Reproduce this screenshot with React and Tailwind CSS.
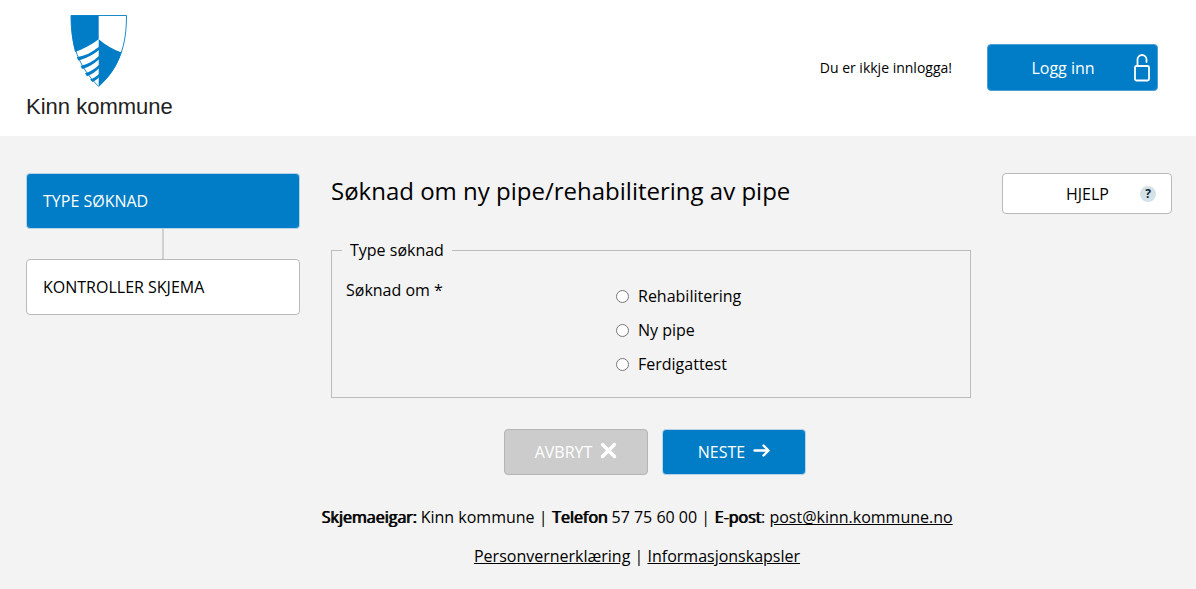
import { useState } from 'react'

const steps = ['Type søknad', 'Kontroller skjema']

const options = [
  { id: 'rehabilitering', label: 'Rehabilitering' },
  { id: 'ny-pipe', label: 'Ny pipe' },
  { id: 'ferdigattest', label: 'Ferdigattest' },
]

function Shield() {
  return (
    <svg className="w-[58px] h-[74px]" viewBox="0 0 58 74" aria-hidden="true">
      <path d="M1 1.500H56.500C56.500 31 50 52 28.700 72.500C8 52 1 31 1 1.500Z" fill="#fff" stroke="#007dc6" strokeWidth="0.9" />
      <path d="M1 1.500H28.700V25.300C21 31 14 35 5 38C2 27 1 14 1 1.500Z" fill="#007dc6" />
      <path d="M28.700 25.300C36 31.500 43 35.500 51.500 38.500C47 52 40 63 28.700 72.500Z" fill="#007dc6" />
      <g fill="#007dc6">
        <path d="M6.800 43.300C15 42 22 38.500 29 32.800V36C22 41.500 16 44.500 8.200 46.400Z" />
        <path d="M10.500 52C17 50.500 23 47.500 29 42V45.300C23.500 50.300 18 53.500 12.200 55Z" />
        <path d="M15 59.300C20 57.800 25 55 29 51V54.200C25.500 58 21.500 60.500 17 62.200Z" />
        <path d="M20 65.500C23.500 64.300 26.500 62.500 29 60V63.200C27 65.200 25 66.800 22.500 68Z" />
      </g>
    </svg>
  )
}

function OpenLock() {
  return (
    <svg className="w-4 h-7" viewBox="0 0 16 28" fill="none" stroke="currentColor" strokeWidth="1.800" aria-hidden="true">
      <rect x="1" y="12" width="14" height="14.500" rx="1.500" />
      <path d="M3.500 12V5.500C3.500 3 5.500 1 8 1S12.500 3 12.500 5.500V8" strokeLinecap="round" />
    </svg>
  )
}

function Header() {
  return (
    <header className="h-[136px] bg-white flex items-start justify-between pl-[26px] pr-[38px]">
      <a href="#" className="flex flex-col items-center pt-3.5">
        <Shield />
        <span className="mt-[5px] text-[22px] leading-7 font-['Liberation_Sans',sans-serif] text-[#222]">Kinn kommune</span>
      </a>
      <div className="flex items-center gap-[35px] pt-11">
        <p className="text-sm">Du er ikkje innlogga!</p>
        <button className="w-[171px] h-[47px] rounded bg-[#007dc6] border border-[#4aa0d5] text-white flex items-center pr-[7px]">
          <span className="flex-1 pl-1">Logg inn</span>
          <OpenLock />
        </button>
      </div>
    </header>
  )
}

function Steps() {
  return (
    <ol className="flex flex-col">
      {steps.map((step, i) => (
        <li key={step} className="flex flex-col">
          {i > 0 && <span className="w-0.5 h-[30px] self-center bg-[#d0d0d0]" />}
          <button
            className={
              i === 0
                ? 'h-14 px-4 rounded border border-[#b8d3e5] bg-[#007dc6] text-white text-left uppercase'
                : 'h-14 px-4 rounded border border-[#b9b9b9] bg-white text-left uppercase'
            }
          >
            {step}
          </button>
        </li>
      ))}
    </ol>
  )
}

function ApplicationForm() {
  const [choice, setChoice] = useState('')

  return (
    <form onSubmit={(e) => e.preventDefault()}>
      <h1 className="text-2xl leading-9">Søknad om ny pipe/rehabilitering av pipe</h1>
      <fieldset className="mt-[29px] border border-[#bbb] px-3.5 pb-[21px]">
        <legend className="-ml-1 px-2 leading-6">Type søknad</legend>
        <div className="grid grid-cols-[270px_1fr] pt-4" role="radiogroup" aria-labelledby="choice-label">
          <span id="choice-label" className="leading-6">Søknad om *</span>
          <div className="flex flex-col gap-2.5 pt-1.5">
            {options.map((option) => (
              <label key={option.id} className="flex items-center gap-[9px] leading-6">
                <input
                  type="radio"
                  name="soknad"
                  value={option.id}
                  checked={choice === option.id}
                  onChange={() => setChoice(option.id)}
                  className="w-[13px] h-[13px]"
                />
                {option.label}
              </label>
            ))}
          </div>
        </div>
      </fieldset>
      <div className="flex justify-center gap-3.5 pt-[31px] pl-2">
        <button
          type="button"
          className="w-36 h-[46px] rounded border border-[#b5b5b5] bg-[#ccc] text-white flex items-center justify-center gap-2"
        >
          AVBRYT
          <svg className="w-[17px] h-[17px] mb-1" viewBox="0 0 17 17" fill="none" stroke="currentColor" strokeWidth="3.400" strokeLinecap="round" aria-hidden="true">
            <path d="M2.500 2.500L14.500 14.500M14.500 2.500L2.500 14.500" />
          </svg>
        </button>
        <button
          type="submit"
          className="w-36 h-[46px] rounded border border-[#b8d3e5] bg-[#007dc6] text-white flex items-center justify-center gap-2"
        >
          NESTE
          <svg className="w-[17px] h-[13px] mb-1" viewBox="0 0 17 13" fill="none" stroke="currentColor" strokeWidth="2.400" strokeLinecap="round" strokeLinejoin="round" aria-hidden="true">
            <path d="M1.500 6.500H15M10.500 1.500L15.500 6.500L10.500 11.500" />
          </svg>
        </button>
      </div>
    </form>
  )
}

function Footer() {
  return (
    <footer className="pt-[30px] pb-5 pl-[78px] text-center leading-6 flex flex-col gap-[15px]">
      <p>
        <b className="font-normal [text-shadow:1px_0_0_#000]">Skjemaeigar:</b> Kinn kommune |{' '}
        <b className="font-normal [text-shadow:1px_0_0_#000]">Telefon</b> 57 75 60 00 |{' '}
        <b className="font-normal [text-shadow:1px_0_0_#000]">E-post</b>:{' '}
        <a href="mailto:post@kinn.kommune.no" className="underline">post@kinn.kommune.no</a>
      </p>
      <p>
        <a href="#" className="underline">Personvernerklæring</a> | <a href="#" className="underline">Informasjonskapsler</a>
      </p>
    </footer>
  )
}

export default function App() {
  return (
    <div className="min-h-screen bg-[#f3f3f3] text-base text-black font-['Open_Sans',sans-serif]">
      <Header />
      <main className="grid grid-cols-[274px_1fr_170px] items-start gap-[31px] pt-[37px] pl-[26px] pr-6">
        <Steps />
        <ApplicationForm />
        <button className="h-[41px] rounded border border-[#b9b9b9] bg-white flex items-center pr-[15px]">
          <span className="flex-1 pl-8">HJELP</span>
          <span className="w-4 h-4 rounded-full bg-[#d5e2e8] text-[#123] text-xs leading-4 font-bold">?</span>
        </button>
      </main>
      <Footer />
    </div>
  )
}
